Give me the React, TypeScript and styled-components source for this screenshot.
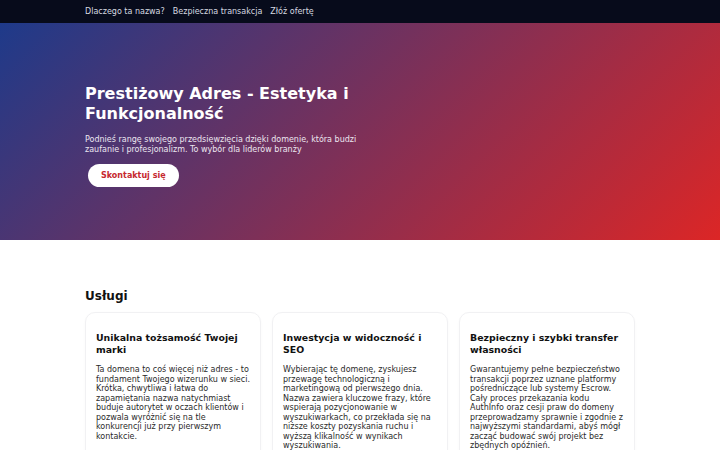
import styled, { createGlobalStyle } from 'styled-components'

const GlobalStyle = createGlobalStyle`
  body {
    margin: 0;
    font-family: "DejaVu Sans", Verdana, sans-serif;
    background: #ffffff;
    color: #111111;
  }
`

const NavBar = styled.nav`
  background: #070b1b;
  height: 23px;
  display: flex;
  align-items: center;
`

const NavInner = styled.div`
  width: 550px;
  margin: 0 auto;
  display: flex;
  gap: 8px;
`

const NavLink = styled.a`
  color: #d6d9e0;
  font-size: 8px;
  text-decoration: none;
`

const Hero = styled.header`
  box-sizing: border-box;
  height: 217px;
  padding-top: 61px;
  background: linear-gradient(135deg, #1e3a8a 0%, #dc2626 100%);
`

const HeroInner = styled.div`
  width: 550px;
  margin: 0 auto;
`

const HeroTitle = styled.h1`
  margin: 0 0 11px;
  width: 300px;
  color: #ffffff;
  font-size: 16px;
  line-height: 20px;
  font-weight: 700;
`

const HeroText = styled.p`
  margin: 0 0 8px;
  width: 290px;
  color: #ece6f0;
  font-size: 8px;
  line-height: 10px;
`

const ContactButton = styled.button`
  margin-left: 3px;
  height: 23px;
  padding: 0 13px;
  border: none;
  border-radius: 12px;
  background: #ffffff;
  color: #c6282e;
  font-family: inherit;
  font-size: 8px;
  font-weight: 700;
`

const Section = styled.section`
  width: 550px;
  margin: 0 auto;
  padding-top: 48px;
`

const SectionTitle = styled.h2`
  margin: 0 0 8px;
  font-size: 12px;
  line-height: 16px;
  font-weight: 700;
`

const CardGrid = styled.div`
  display: grid;
  grid-template-columns: repeat(3, 1fr);
  gap: 11px;
`

const Card = styled.article`
  border: 1px solid #f1f1f3;
  border-radius: 10px;
  padding: 19px 10px 12px;
  box-shadow: 0 1px 3px rgba(0, 0, 0, 0.03);
`

const CardTitle = styled.h3`
  margin: 0 0 10px;
  font-size: 9.4px;
  line-height: 11.5px;
  font-weight: 700;
  color: #111111;
`

const CardText = styled.p`
  margin: 0;
  font-size: 8px;
  line-height: 9.5px;
  color: #2a2a2a;
`

const services = [
  {
    title: 'Unikalna tożsamość Twojej marki',
    text: 'Ta domena to coś więcej niż adres - to fundament Twojego wizerunku w sieci. Krótka, chwytliwa i łatwa do zapamiętania nazwa natychmiast buduje autorytet w oczach klientów i pozwala wyróżnić się na tle konkurencji już przy pierwszym kontakcie.',
  },
  {
    title: 'Inwestycja w widoczność i SEO',
    text: 'Wybierając tę domenę, zyskujesz przewagę technologiczną i marketingową od pierwszego dnia. Nazwa zawiera kluczowe frazy, które wspierają pozycjonowanie w wyszukiwarkach, co przekłada się na niższe koszty pozyskania ruchu i wyższą klikalność w wynikach wyszukiwania.',
  },
  {
    title: 'Bezpieczny i szybki transfer własności',
    text: 'Gwarantujemy pełne bezpieczeństwo transakcji poprzez uznane platformy pośredniczące lub systemy Escrow. Cały proces przekazania kodu AuthInfo oraz cesji praw do domeny przeprowadzamy sprawnie i zgodnie z najwyższymi standardami, abyś mógł zacząć budować swój projekt bez zbędnych opóźnień.',
  },
]

export default function App() {
  return (
    <>
      <GlobalStyle />
      <NavBar>
        <NavInner>
          <NavLink href="#">Dlaczego ta nazwa?</NavLink>
          <NavLink href="#">Bezpieczna transakcja</NavLink>
          <NavLink href="#">Złóż ofertę</NavLink>
        </NavInner>
      </NavBar>
      <Hero>
        <HeroInner>
          <HeroTitle>Prestiżowy Adres - Estetyka i Funkcjonalność</HeroTitle>
          <HeroText>
            Podnieś rangę swojego przedsięwzięcia dzięki domenie, która budzi zaufanie i profesjonalizm. To wybór dla liderów branży
          </HeroText>
          <ContactButton>Skontaktuj się</ContactButton>
        </HeroInner>
      </Hero>
      <Section>
        <SectionTitle>Usługi</SectionTitle>
        <CardGrid>
          {services.map((s) => (
            <Card key={s.title}>
              <CardTitle>{s.title}</CardTitle>
              <CardText>{s.text}</CardText>
            </Card>
          ))}
        </CardGrid>
      </Section>
    </>
  )
}
